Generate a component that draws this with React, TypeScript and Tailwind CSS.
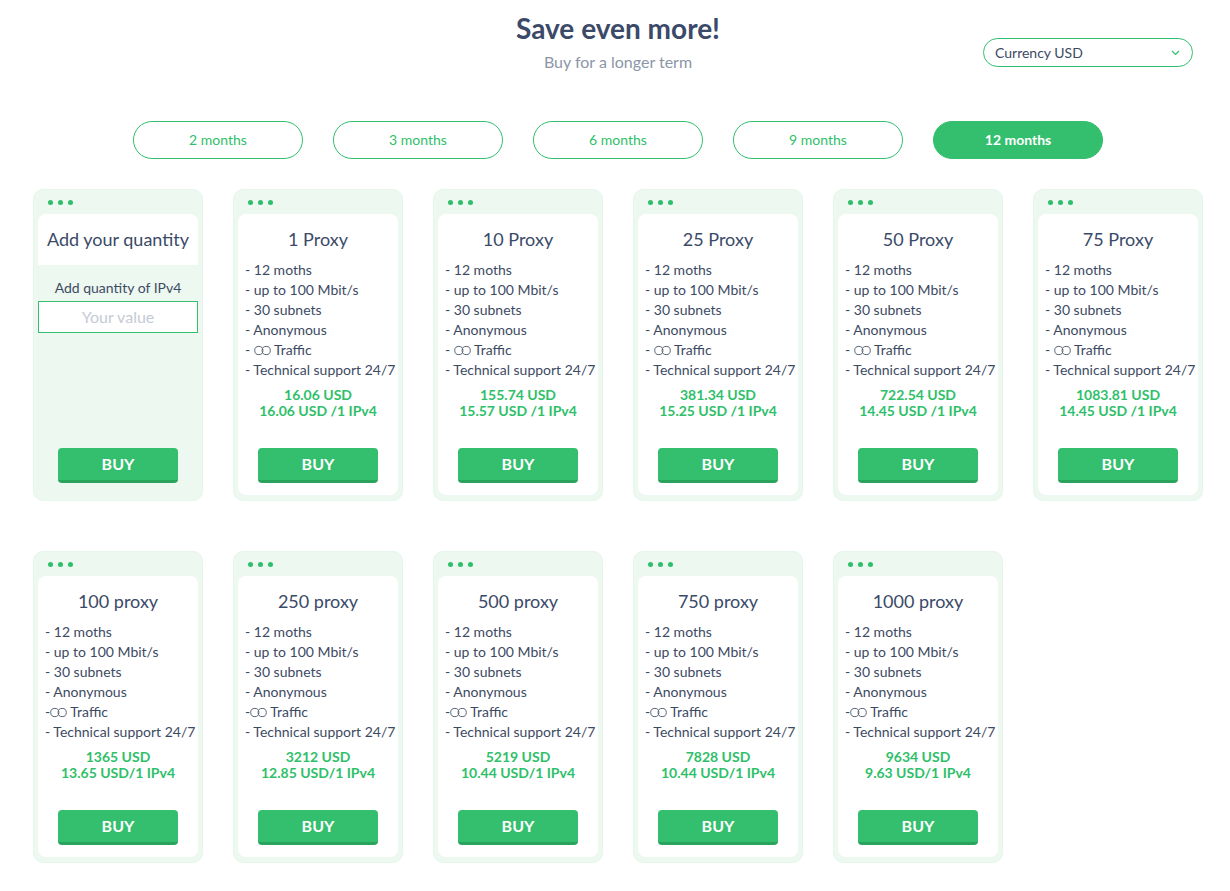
import { useState } from "react";

interface Plan {
  title: string;
  total: string;
  perIp: string;
  spaced: boolean;
}

const plans: Plan[] = [
  { title: "1 Proxy", total: "16.06 USD", perIp: "16.06 USD /1 IPv4", spaced: true },
  { title: "10 Proxy", total: "155.74 USD", perIp: "15.57 USD /1 IPv4", spaced: true },
  { title: "25 Proxy", total: "381.34 USD", perIp: "15.25 USD /1 IPv4", spaced: true },
  { title: "50 Proxy", total: "722.54 USD", perIp: "14.45 USD /1 IPv4", spaced: true },
  { title: "75 Proxy", total: "1083.81 USD", perIp: "14.45 USD /1 IPv4", spaced: true },
  { title: "100 proxy", total: "1365 USD", perIp: "13.65 USD/1 IPv4", spaced: false },
  { title: "250 proxy", total: "3212 USD", perIp: "12.85 USD/1 IPv4", spaced: false },
  { title: "500 proxy", total: "5219 USD", perIp: "10.44 USD/1 IPv4", spaced: false },
  { title: "750 proxy", total: "7828 USD", perIp: "10.44 USD/1 IPv4", spaced: false },
  { title: "1000 proxy", total: "9634 USD", perIp: "9.63 USD/1 IPv4", spaced: false },
];

const terms = ["2 months", "3 months", "6 months", "9 months", "12 months"];

function Infinity() {
  return (
    <svg width="17" height="11" viewBox="0 0 17 11" className="inline-block align-[-1px]">
      <circle cx="4.8" cy="5.5" r="4.1" fill="none" stroke="#5a6478" strokeWidth="1" />
      <circle cx="12.2" cy="5.5" r="4.1" fill="none" stroke="#5a6478" strokeWidth="1" />
    </svg>
  );
}

function Dots() {
  return (
    <div className="flex h-[24px] items-center gap-[5px] pl-[14px]">
      <span className="h-[5px] w-[5px] rounded-full bg-[#2fbf6a]" />
      <span className="h-[5px] w-[5px] rounded-full bg-[#2fbf6a]" />
      <span className="h-[5px] w-[5px] rounded-full bg-[#2fbf6a]" />
    </div>
  );
}

function BuyButton() {
  return (
    <button className="mx-auto flex h-[35px] w-[120px] items-center justify-center rounded-[4px] border-b-[3px] border-[#2aa35c] bg-[#33bf6d] text-[16px] font-bold text-white">
      BUY
    </button>
  );
}

function CardShell({ children }: { children: React.ReactNode }) {
  return (
    <div className="flex h-[312px] w-[170px] flex-col rounded-[10px] border border-[#e6f6eb] bg-[#edf8f1]">
      <Dots />
      {children}
    </div>
  );
}

function QuantityCard() {
  const [value, setValue] = useState("");
  return (
    <CardShell>
      <div className="mx-[4px] flex h-[51px] items-center justify-center rounded-t-[8px] bg-white text-[18px] text-[#3b4a68]">
        Add your quantity
      </div>
      <div className="flex flex-1 flex-col px-[4px] pb-[17px]">
        <p className="mt-[13px] text-center text-[14px] leading-[20px] text-[#3d4a63]">Add quantity of IPv4</p>
        <input
          value={value}
          onChange={(e) => setValue(e.target.value)}
          placeholder="Your value"
          className="mt-[3px] h-[32px] w-full border border-[#33bf6d] bg-white pb-[2px] text-center text-[16px] text-[#3d4a63] outline-none placeholder:text-[#c6cbd4]"
        />
        <div className="mt-auto">
          <BuyButton />
        </div>
      </div>
    </CardShell>
  );
}

function PlanCard({ plan }: { plan: Plan }) {
  const features = ["12 moths", "up to 100 Mbit/s", "30 subnets", "Anonymous"];
  return (
    <CardShell>
      <div className="mx-[4px] mb-[5px] flex flex-1 flex-col rounded-[8px] bg-white pb-[12px]">
        <h3 className="mt-[12px] text-center text-[18px] leading-[26px] text-[#3b4a68]">{plan.title}</h3>
        <ul className="mt-[8px] pl-[7px] text-[14px] leading-[20px] whitespace-nowrap text-[#3d4a63]">
          {features.map((f) => (
            <li key={f}>- {f}</li>
          ))}
          <li>
            {plan.spaced ? "- " : "-"}
            <Infinity /> Traffic
          </li>
          <li>- Technical support 24/7</li>
        </ul>
        <div className="mt-[7px] text-center text-[14px] font-bold leading-[16px] text-[#2fbf6a]">
          <p>{plan.total}</p>
          <p>{plan.perIp}</p>
        </div>
        <div className="mt-auto">
          <BuyButton />
        </div>
      </div>
    </CardShell>
  );
}

export default function App() {
  const [term, setTerm] = useState(4);
  return (
    <div className="min-h-[891px] bg-white pt-[10px] pb-[28px]" style={{ fontFamily: "Lato, 'Noto Sans', sans-serif" }}>
      <div className="ml-[33px] w-[1170px]">
        <div className="grid grid-cols-[1fr_auto_1fr]">
          <div />
          <div className="text-center">
            <h1 className="text-[28px] font-bold leading-[36px] text-[#3b4a68]">Save even more!</h1>
            <p className="mt-[6px] text-[16px] leading-[20px] text-[#8b96a8]">Buy for a longer term</p>
          </div>
          <div className="flex justify-end pr-[10px] pt-[28px]">
            <button className="flex h-[29px] w-[210px] items-center justify-between rounded-full border border-[#33bf6d] pl-[11px] pr-[12px] text-[14px] text-[#3d4a63]">
              <span>Currency USD</span>
              <svg width="9" height="6" viewBox="0 0 9 6">
                <path d="M1 1l3.5 3.5L8 1" fill="none" stroke="#33bf6d" strokeWidth="1.2" />
              </svg>
            </button>
          </div>
        </div>

        <div className="mt-[49px] flex justify-center gap-[30px]">
          {terms.map((t, i) => (
            <button
              key={t}
              onClick={() => setTerm(i)}
              className={
                term === i
                  ? "h-[38px] w-[170px] rounded-full border border-[#33bf6d] bg-[#33bf6d] pb-[2px] text-[14px] font-bold text-white"
                  : "h-[38px] w-[170px] rounded-full border border-[#33bf6d] bg-white pb-[2px] text-[14px] text-[#2fbf6a]"
              }
            >
              {t}
            </button>
          ))}
        </div>

        <div className="mt-[30px] grid grid-cols-[repeat(6,170px)] gap-x-[30px] gap-y-[50px]">
          <QuantityCard />
          {plans.map((p) => (
            <PlanCard key={p.title} plan={p} />
          ))}
        </div>
      </div>
    </div>
  );
}
